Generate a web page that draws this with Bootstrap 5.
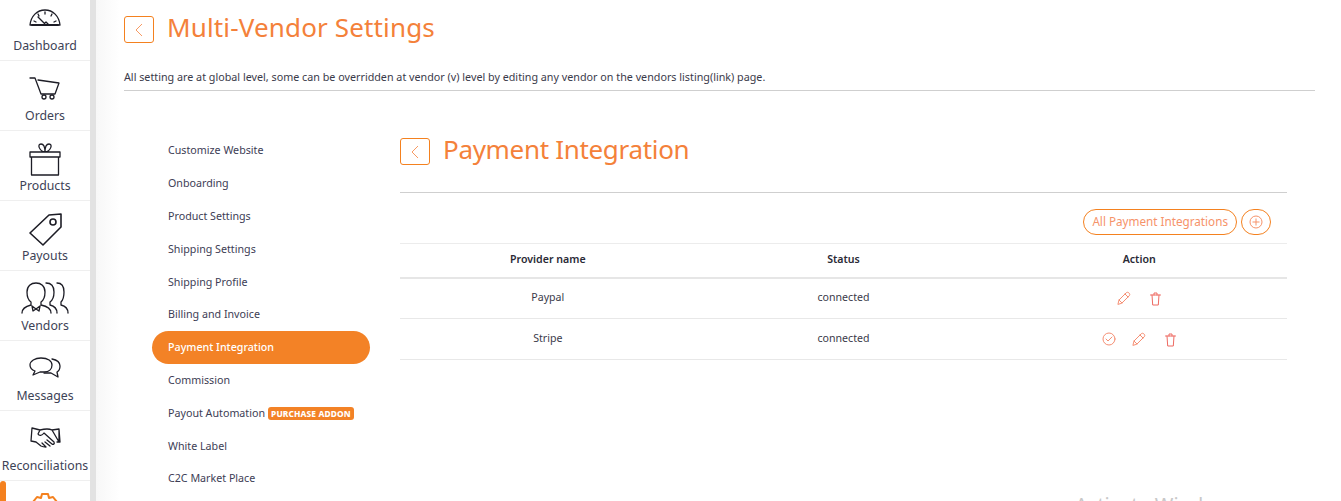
<!DOCTYPE html>
<html lang="en">
<head>
<meta charset="utf-8">
<title>Multi-Vendor Settings</title>
<link href="https://cdn.jsdelivr.net/npm/bootstrap@5.3.0/dist/css/bootstrap.min.css" rel="stylesheet">
<style>
html,body{height:501px;overflow:hidden}
body{font-family:"Noto Sans","Open Sans",sans-serif;color:#3a3a4a;background:#fff;font-size:11px}
.shell{height:501px;overflow:hidden}
.side{width:96px;flex:none;height:501px;overflow:hidden;border-right:6px solid #e2e2e2;background:#fff;position:relative}
.side-item{flex:none;height:70px;border-bottom:1px solid #efefef;font-size:12.3px;color:#3d4256;line-height:18px;padding-bottom:5px}
.side-item:first-child{height:61px}
.side-item svg{display:block;fill:none;stroke:#1d1d26;stroke-width:1.3;stroke-linecap:round;stroke-linejoin:round}
.side-item svg.gear{stroke:#f4811f;stroke-width:2;margin-top:11px}
.gap-a{margin-bottom:11px}.gap-b{margin-bottom:7px}.gap-c{margin-bottom:1px}.gap-d{margin-bottom:3px}.gap-e{margin-bottom:9px}
.side-mark{position:absolute;left:0;top:481px;width:6px;height:30px;background:#f4811f;border-radius:4px 4px 0 0}
.main-area{min-width:0;padding:0 26px 0 28px;background:linear-gradient(90deg,#f7f7f7,#fff 24px)}
.head-row{height:56px;padding-top:16px}
.back-btn{width:30px;height:27px;border:1px solid #f4811f;border-radius:3px;flex:none;background:#fff}
.back-btn svg{fill:none;stroke:#f79a63;stroke-width:1}
.page-title{font-size:26px;color:#f4813a;font-weight:400;line-height:27px;margin:-2px 0 0 13px}
.title-top{letter-spacing:.15px}
.title-sub{letter-spacing:-.32px}
.note{font-size:10.75px;line-height:14px;color:#3a3a4a;margin:0;padding:14px 0 6px;border-bottom:1px solid #cfcfcf}
.menu-col{width:246px;flex:none;padding:43.4px 0 0 28px}
.menu-link{display:block;height:32.8px;line-height:32.8px;padding-left:16px;border-radius:17px;color:#3d3d55;font-size:10.7px;text-decoration:none;width:218px}
.menu-link.is-on{background:#f38226;color:#fff;font-weight:500}
.addon{background:#f38226;color:#fff;font-size:8.4px;font-weight:800;padding:1px 3px;border-radius:3px;margin-left:3px;letter-spacing:.1px}
.panel{width:887px;flex:none;margin-left:30px;padding-top:47px}
.panel-head{padding-bottom:27px;border-bottom:1px solid #cfcfcf;height:55px}
.tools{height:50px;padding-top:16px;gap:4px}
.pill{height:26px;border:1px solid #f4811f;border-radius:13px;color:#f6936a;font-size:11.7px;line-height:22px;padding:0 8px;background:#fff}
.pill-round{width:30px;padding:0;display:flex;align-items:center;justify-content:center}
.pill-round svg{fill:none;stroke:#f6936a;stroke-width:1}
.data-grid{font-size:10.6px;color:#3a3a4a;table-layout:fixed;width:887px;margin:0}
.data-grid th{font-weight:600;color:#2a2a36;height:34px;padding:0;text-align:center;vertical-align:middle;border-top:1px solid #ececec;border-bottom:2px solid #e6e6e6}
.data-grid td{height:41px;padding:0;text-align:center;vertical-align:middle;border-bottom:1px solid #e8e8e8}
.act svg{fill:none;stroke:#f58f74;stroke-width:1;stroke-linecap:round;stroke-linejoin:round;vertical-align:middle}
.act{display:inline-flex;gap:16px;align-items:center;margin-top:3px}
.act svg.bin{stroke:#ee6a62;margin-left:2px;margin-top:2px}
.watermark{position:absolute;left:1075px;top:492px;font-size:20px;line-height:26px;color:#c8c8c8}
</style>
</head>
<body>
<div class="shell d-flex position-relative">
  <nav class="side d-flex flex-column text-center">
    <div class="side-item d-flex flex-column align-items-center justify-content-end">
      <svg class="gap-a" width="32" height="17" viewBox="0 0 32 17"><path d="M1 16C2 7 8 1 16 1s14 6 15 15z"/><path d="M3 16h26" stroke-width="2"/><path d="M9 8l8 8M14 16l3-3 3 3M5 12l2 1M9 5l1 2M16 3v2M23 5l-1 2M27 12l-2 1"/></svg>
      <span>Dashboard</span>
    </div>
    <div class="side-item d-flex flex-column align-items-center justify-content-end">
      <svg class="gap-b" width="32" height="24" viewBox="0 0 32 24"><path d="M1 2h5l6 16h14l4-11L9 4"/><circle cx="15" cy="21" r="2"/><circle cx="23" cy="21" r="2"/></svg>
      <span>Orders</span>
    </div>
    <div class="side-item d-flex flex-column align-items-center justify-content-end">
      <svg class="gap-c" width="34" height="34" viewBox="0 0 34 34"><path d="M2 10h30v5H2zM3.500 15h27v18h-27zM17 10c-6-1-8-8-4-8 3 0 4 4 4 8 0-4 1-8 4-8 4 0 2 7-4 8z"/></svg>
      <span>Products</span>
    </div>
    <div class="side-item d-flex flex-column align-items-center justify-content-end">
      <svg class="gap-c" width="33" height="33" viewBox="0 0 33 33"><path d="M1 20L20 2l12-1v13L14 32z" stroke-width="1.600"/><circle cx="24" cy="9" r="3" stroke-width="1.600"/></svg>
      <span>Payouts</span>
    </div>
    <div class="side-item d-flex flex-column align-items-center justify-content-end">
      <svg class="gap-d" width="48" height="32" viewBox="0 0 48 32"><path d="M1 31c0-5 5-7 9-8v-3c-3-2-4-5-4-10C6 4 10 1 15 1s9 3 9 9c0 5-1 8-4 10v3c5 1 10 3 10 8M11 24l4 3 4-3-1 5-3-2-3 2zM25 1c5 0 8 3 8 9 0 5-1 8-4 10v3c4 1 7 3 7 8M36 1c4 0 7 3 7 9 0 5-1 8-3 10v3c4 1 7 3 7 8"/></svg>
      <span>Vendors</span>
    </div>
    <div class="side-item d-flex flex-column align-items-center justify-content-end">
      <svg class="gap-e" width="32" height="21" viewBox="0 0 32 21"><path d="M12 1C6 1 1 4 1 8c0 3 2 5 5 6l-2 4 7-3h4c5 0 8-3 8-7s-4-7-11-7z"/><path d="M23 2c5 1 8 3 8 7 0 3-1 5-3 6l1 5-7-4h-7"/></svg>
      <span>Messages</span>
    </div>
    <div class="side-item d-flex flex-column align-items-center justify-content-end">
      <svg class="gap-e" width="32" height="21" viewBox="0 0 32 21"><path d="M3 1l8 2-2 4M2 14L3 1M2 14l5 1M30 2l-7 1 7 12zM30 2l1 13-3 0M23 3c-4-2-8-1-12 0L9 7c1 2 4 2 6-1l10 9c1 2-1 3-2 2l-5-4M21 19l-5-4M17 20l-4-4M7 15l5 4c2 1 3 1 5 1"/></svg>
      <span>Reconciliations</span>
    </div>
    <div class="side-item d-flex flex-column align-items-center"><svg class="gear" width="28" height="28" viewBox="0 0 28 28"><path d="M11 2h6l1 4 4-1 4 5-3 3 3 4-4 5-4-1-1 5h-6l-1-5-4 1-4-5 3-4-3-3 4-5 4 1z"/></svg></div>
    <span class="side-mark"></span>
  </nav>
  <main class="main-area flex-grow-1">
    <div class="head-row d-flex align-items-start">
      <span class="back-btn d-flex align-items-center justify-content-center"><svg width="10" height="14" viewBox="0 0 10 14"><path d="M8 1L2 7l6 6"/></svg></span>
      <h1 class="page-title title-top">Multi-Vendor Settings</h1>
    </div>
    <p class="note">All setting are at global level, some can be overridden at vendor (v) level by editing any vendor on the vendors listing(link) page.</p>
    <div class="d-flex">
      <div class="menu-col">
        <a class="menu-link" href="#">Customize Website</a>
        <a class="menu-link" href="#">Onboarding</a>
        <a class="menu-link" href="#">Product Settings</a>
        <a class="menu-link" href="#">Shipping Settings</a>
        <a class="menu-link" href="#">Shipping Profile</a>
        <a class="menu-link" href="#">Billing and Invoice</a>
        <a class="menu-link is-on" href="#">Payment Integration</a>
        <a class="menu-link" href="#">Commission</a>
        <a class="menu-link" href="#">Payout Automation<span class="addon">PURCHASE ADDON</span></a>
        <a class="menu-link" href="#">White Label</a>
        <a class="menu-link" href="#">C2C Market Place</a>
      </div>
      <section class="panel">
        <div class="panel-head d-flex align-items-start">
          <span class="back-btn d-flex align-items-center justify-content-center"><svg width="10" height="14" viewBox="0 0 10 14"><path d="M8 1L2 7l6 6"/></svg></span>
          <h2 class="page-title title-sub">Payment Integration</h2>
        </div>
        <div class="tools d-flex justify-content-end pe-3">
          <span class="pill">All Payment Integrations</span>
          <span class="pill pill-round"><svg width="14" height="14" viewBox="0 0 14 14"><circle cx="7" cy="7" r="6"/><path d="M7 3.500v7M3.500 7h7"/></svg></span>
        </div>
        <table class="data-grid">
          <thead><tr><th>Provider name</th><th>Status</th><th>Action</th></tr></thead>
          <tbody>
            <tr><td>Paypal</td><td>connected</td><td><span class="act">
              <svg width="14" height="14" viewBox="0 0 14 14"><path d="M1 13l1-4 7-7c1-1 2-1 3 0s1 2 0 3l-7 7zM2 9l3 3M8 3l3 3"/></svg>
              <svg class="bin" width="13" height="14" viewBox="0 0 13 14"><path d="M1.500 3h10M3 3l.7 10h5.600L10 3M5 3V1h3v2"/></svg>
            </span></td></tr>
            <tr><td>Stripe</td><td>connected</td><td><span class="act">
              <svg width="14" height="14" viewBox="0 0 14 14"><circle cx="7" cy="7" r="6"/><path d="M4 7l2 2 4-4"/></svg>
              <svg width="14" height="14" viewBox="0 0 14 14"><path d="M1 13l1-4 7-7c1-1 2-1 3 0s1 2 0 3l-7 7zM2 9l3 3M8 3l3 3"/></svg>
              <svg class="bin" width="13" height="14" viewBox="0 0 13 14"><path d="M1.500 3h10M3 3l.7 10h5.600L10 3M5 3V1h3v2"/></svg>
            </span></td></tr>
          </tbody>
        </table>
      </section>
    </div>
  </main>
  <div class="watermark">Activate Windows</div>
</div>
<script src="https://cdn.jsdelivr.net/npm/bootstrap@5.3.0/dist/js/bootstrap.bundle.min.js"></script>
</body>
</html>
